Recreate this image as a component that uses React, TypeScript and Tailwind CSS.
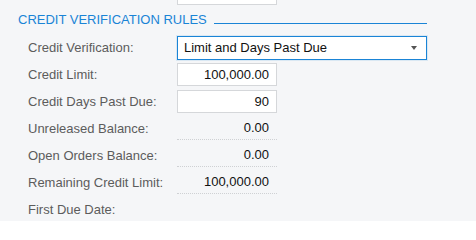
export default function App() {
  const readOnly: [string, string][] = [
    ["Unreleased Balance:", "0.00"],
    ["Open Orders Balance:", "0.00"],
    ["Remaining Credit Limit:", "100,000.00"],
  ];

  return (
    <div className="w-[476px] h-[221px] overflow-hidden bg-[#f5f6f8] font-['Liberation_Sans',Arial,sans-serif] text-[13px]">
      {/* tail of the field above */}
      <div className="ml-[177px] w-[100px] h-[5px] border border-t-0 border-[#d5d7da] bg-white" />

      {/* section header */}
      <div className="mt-[7px] flex items-end pl-[18px] w-[427px]">
        <span className="text-[13px] leading-[16px] text-[#1a84d6]">CREDIT VERIFICATION RULES</span>
        <div className="flex-1 ml-[7px] mb-[4px] h-px bg-[#1a84d6]" />
      </div>

      <div className="mt-[8px] flex flex-col gap-[4px]">
        {/* Credit Verification */}
        <div className="flex items-center h-[23px]">
          <label className="w-[177px] pl-[28px] text-[#5c5c5c]">Credit Verification:</label>
          <div className="w-[250px] h-[24px] flex items-center justify-between bg-white border border-[#1a84d6] shadow-[0_0_0_1px_rgba(26,132,214,0.12)] pl-[6px] pr-[9px] text-[#111]">
            <span>Limit and Days Past Due</span>
            <span className="w-0 h-0 border-l-[3px] border-r-[3px] border-t-[4px] border-l-transparent border-r-transparent border-t-[#555]" />
          </div>
        </div>

        {/* Credit Limit */}
        <div className="flex items-center h-[23px]">
          <label className="w-[177px] pl-[28px] text-[#5c5c5c]">Credit Limit:</label>
          <div className="w-[100px] h-[23px] flex items-center justify-end bg-white border border-[#d5d7da] pr-[7px] text-[#111]">
            100,000.00
          </div>
        </div>

        {/* Credit Days Past Due */}
        <div className="flex items-center h-[23px]">
          <label className="w-[177px] pl-[28px] text-[#5c5c5c]">Credit Days Past Due:</label>
          <div className="w-[100px] h-[23px] flex items-center justify-end bg-white border border-[#d5d7da] pr-[7px] text-[#111]">
            90
          </div>
        </div>

        {/* read-only values */}
        {readOnly.map(([label, value]) => (
          <div key={label} className="flex items-center h-[23px]">
            <label className="w-[177px] pl-[28px] text-[#5c5c5c]">{label}</label>
            <div className="w-[100px] h-[23px] flex items-center justify-end border-b border-dotted border-[#cfd1d4] pr-[8px] text-[#111]">
              {value}
            </div>
          </div>
        ))}

        <div className="flex items-center h-[23px]">
          <label className="w-[177px] pl-[28px] text-[#5c5c5c]">First Due Date:</label>
        </div>
      </div>
    </div>
  );
}
